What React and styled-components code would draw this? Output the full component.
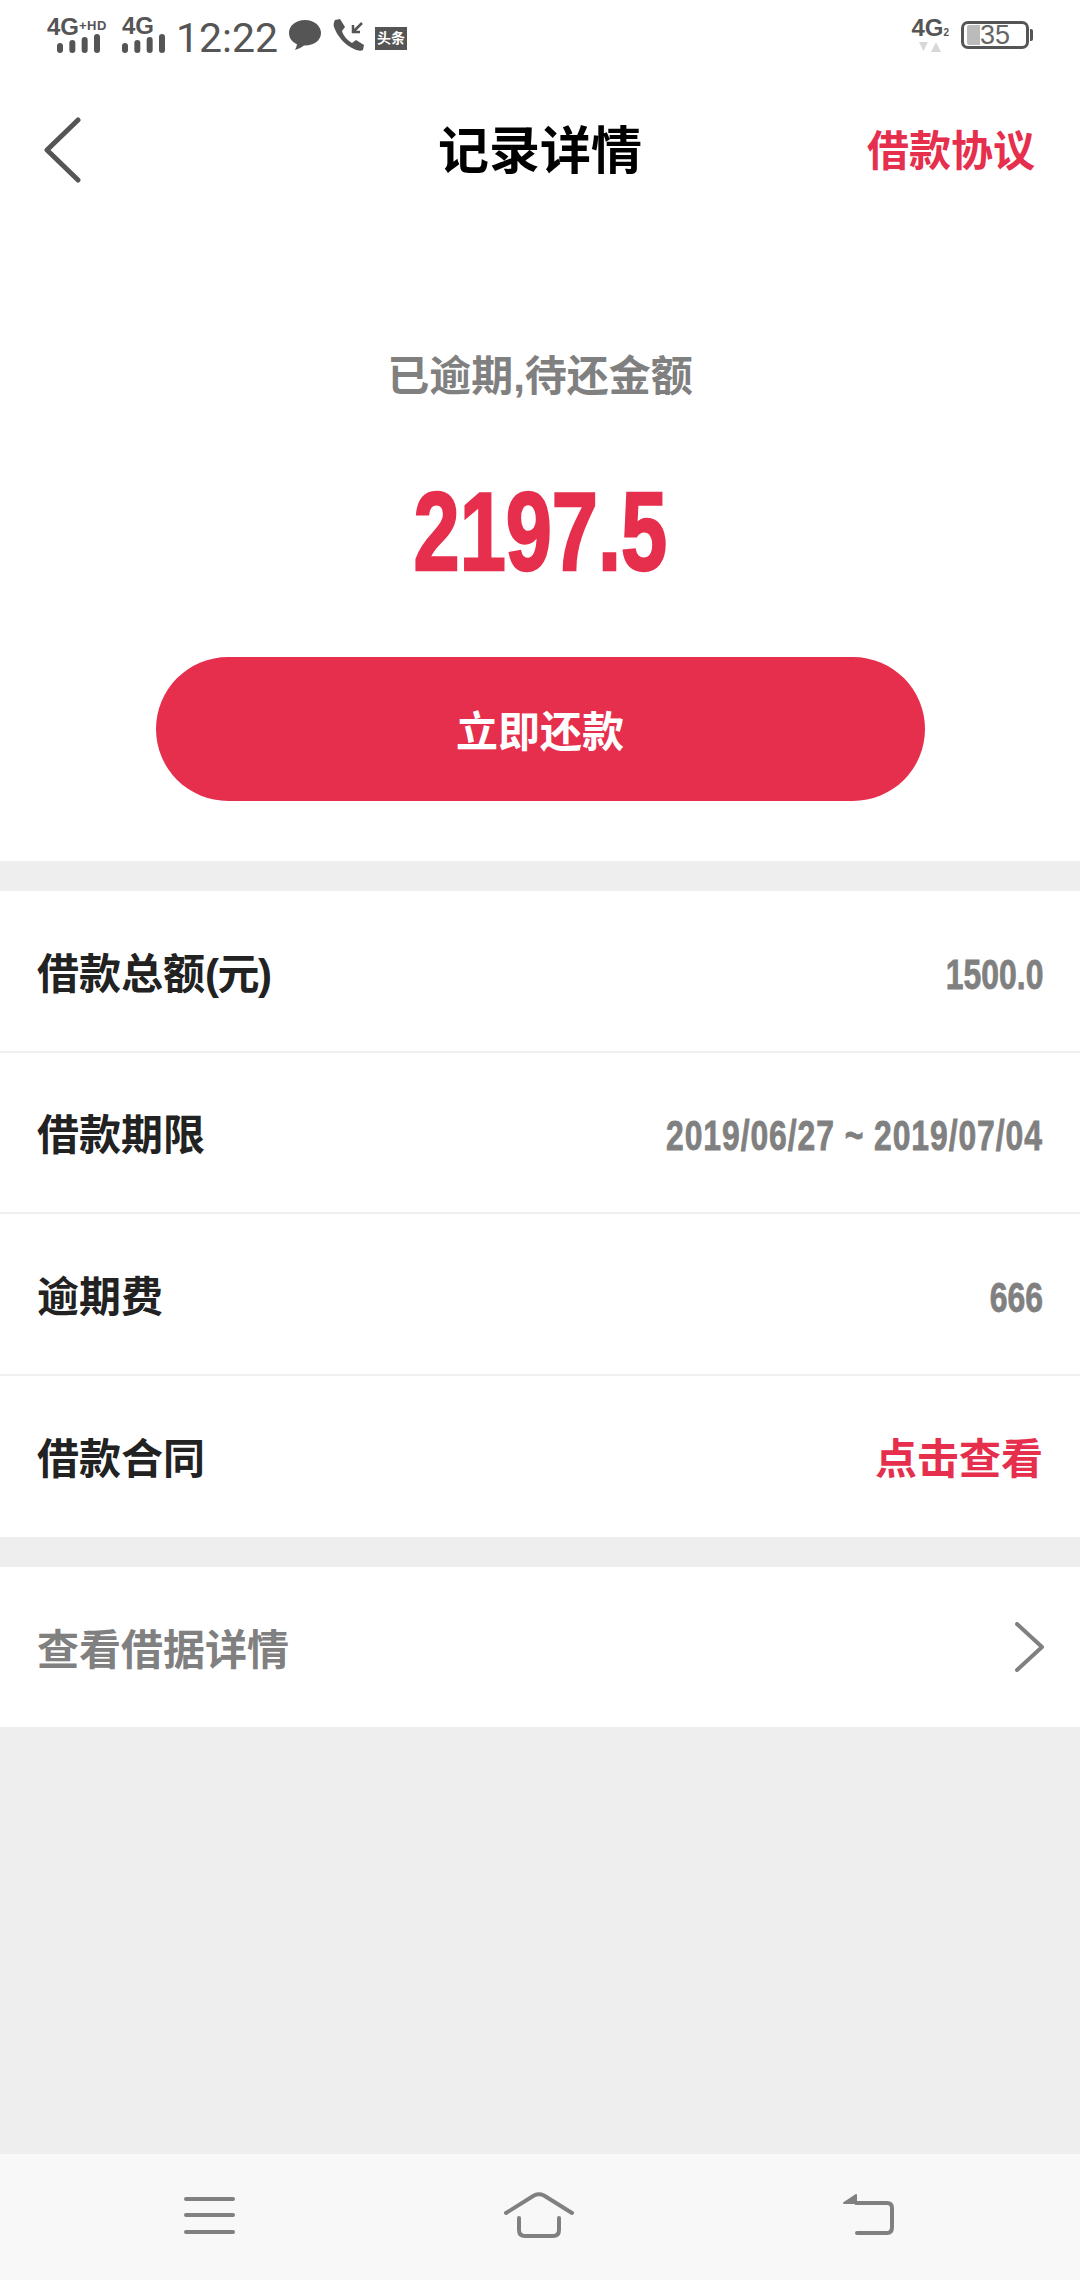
import React from "react";
import styled, { createGlobalStyle } from "styled-components";

const RED = "#e62e4d";
const GREY = "#808080";
const ICON = "#555";

const GlobalStyle = createGlobalStyle`
  html, body {
    margin: 0;
    padding: 0;
    background: #eee;
    font-family: "Liberation Sans", "Noto Sans CJK SC", sans-serif;
  }
`;

const Page = styled.div`
  display: flex;
  flex-direction: column;
  width: 1080px;
  height: 2280px;
  overflow: hidden;
  background: #eee;
`;

const StatusBar = styled.div`
  display: flex;
  align-items: center;
  justify-content: space-between;
  height: 70px;
  padding: 0 47px;
  background: #fff;
  box-sizing: border-box;
  color: ${ICON};
`;

const StatusGroup = styled.div`
  display: flex;
  align-items: center;
`;

const Signal = styled.div`
  display: flex;
  flex-direction: column;
  width: ${props => props.$width}px;
  margin-right: ${props => props.$gap}px;
  margin-top: 1px;
`;

const SignalLabel = styled.div`
  height: 16px;
  font-size: 24px;
  line-height: 16px;
  font-weight: 700;
  white-space: nowrap;
`;

const SignalSup = styled.span`
  font-size: 13px;
  vertical-align: 5px;
  letter-spacing: 0.5px;
`;

const SignalBars = styled.div`
  height: 19px;
  margin-left: ${props => props.$inset || 0}px;
  line-height: 0;
`;

const Time = styled.div`
  margin: 5px 11px 0 0;
  font-family: Roboto, sans-serif;
  font-size: 41px;
  line-height: 40px;
`;

const PhoneSlot = styled.div`
  margin-left: 11px;
  line-height: 0;
`;

const Toutiao = styled.div`
  width: 32px;
  height: 23px;
  margin: 6px 0 0 9px;
  background: ${ICON};
  color: #fff;
  font-size: 14px;
  line-height: 23px;
  font-weight: 700;
  text-align: center;
  white-space: nowrap;
`;

const Network = styled.div`
  display: flex;
  flex-direction: column;
  align-items: center;
  margin-right: 12px;
  font-size: 24px;
  line-height: 19px;
  font-weight: 700;
`;

const NetworkSub = styled.span`
  font-size: 10px;
`;

const Battery = styled.div`
  position: relative;
  display: flex;
  align-items: center;
  width: 68px;
  height: 28px;
  margin-right: 4px;
  padding: 0 3px;
  border: 3px solid ${ICON};
  border-radius: 7px;
  box-sizing: border-box;
  font-size: 27px;
  color: #666;
  &::after {
    content: "";
    position: absolute;
    right: -7px;
    top: 5px;
    width: 3px;
    height: 12px;
    background: ${ICON};
    border-radius: 0 2px 2px 0;
  }
`;

const BatteryFill = styled.div`
  width: 13px;
  height: 20px;
  background: #bbb;
  border-radius: 2px 0 0 2px;
`;

const Header = styled.div`
  display: grid;
  grid-template-columns: 1fr auto 1fr;
  align-items: center;
  height: 160px;
  padding: 0 45px;
  background: #fff;
  box-sizing: border-box;
`;

const BackSlot = styled.div`
  margin-left: -3px;
  line-height: 0;
`;

const Title = styled.div`
  padding-top: 3px;
  font-size: 51px;
  line-height: 60px;
  font-weight: 700;
  color: #000;
`;

const HeaderLink = styled.div`
  justify-self: end;
  padding-top: 3px;
  font-size: 42px;
  line-height: 60px;
  font-weight: 700;
  color: ${RED};
`;

const Hero = styled.div`
  display: flex;
  flex-direction: column;
  align-items: center;
  padding: 117px 0 60px;
  background: #fff;
`;

const HeroLabel = styled.div`
  font-size: 42px;
  line-height: 60px;
  font-weight: 700;
  color: ${GREY};
`;

const Amount = styled.div`
  margin-top: 65px;
  font-size: 112px;
  line-height: 120px;
  font-weight: 700;
  color: ${RED};
  -webkit-text-stroke: 2.5px ${RED};
  transform: scaleX(0.74);
`;

const PayButton = styled.div`
  width: 769px;
  height: 144px;
  margin-top: 65px;
  padding-top: 4px;
  border-radius: 72px;
  background: ${RED};
  color: #fff;
  font-size: 42px;
  line-height: 144px;
  font-weight: 700;
  text-align: center;
  box-sizing: border-box;
`;

const List = styled.div`
  margin-top: 30px;
  background: #fff;
`;

const Row = styled.div`
  display: flex;
  align-items: center;
  justify-content: space-between;
  height: ${props => props.$height || "161.5px"};
  padding: 0 37px;
  box-sizing: border-box;
  border-bottom: ${props => (props.$last ? "none" : "2px solid #f0f0f0")};
`;

const RowLabel = styled.div`
  padding-top: 8px;
  font-size: 42px;
  line-height: 60px;
  font-weight: 700;
  color: ${props => props.$color || "#222"};
`;

const Paren = styled.span`
  letter-spacing: -1.5px;
`;

const RowValue = styled.div`
  padding-top: 8px;
  font-size: 42px;
  line-height: 60px;
  font-weight: 700;
  color: ${GREY};
  white-space: nowrap;
  letter-spacing: ${props => (props.$wide ? "1.2px" : "0")};
  -webkit-text-stroke: 0.8px ${GREY};
  transform: scaleX(0.76);
  transform-origin: right center;
`;

const RowLink = styled.div`
  padding-top: 8px;
  font-size: 42px;
  line-height: 60px;
  font-weight: 700;
  color: ${RED};
`;

const ChevronSlot = styled.div`
  margin-right: -2px;
  line-height: 0;
`;

const Spacer = styled.div`
  flex: 1;
`;

const NavBar = styled.div`
  display: grid;
  grid-template-columns: repeat(3, 1fr);
  justify-items: center;
  align-items: center;
  height: 126px;
  padding: 0 48px 4px 46px;
  box-sizing: border-box;
  background: #f8f8f8;
`;

const Bars = ({ width, heights }) => (
  <svg width={width} height="19" viewBox={`0 0 ${width} 19`} fill={ICON}>
    {heights.map((h, i) => (
      <rect key={i} x={i * ((width - 6) / 3)} y={19 - h} width="6" height={h} rx="3" />
    ))}
  </svg>
);

const BackIcon = () => (
  <svg width="40" height="66" viewBox="0 0 40 66" fill="none" stroke={ICON} strokeWidth="5" strokeLinecap="round" strokeLinejoin="round">
    <path d="M36 3 L5 33 L36 63" />
  </svg>
);

const ChevronIcon = () => (
  <svg width="30" height="50" viewBox="0 0 30 50" fill="none" stroke={GREY} strokeWidth="4" strokeLinecap="round" strokeLinejoin="round">
    <path d="M2 2 L27 25 L2 48" />
  </svg>
);

export default function App() {
  return (
    <Page>
      <GlobalStyle />
      <StatusBar>
        <StatusGroup>
          <Signal $width={64} $gap={11}>
            <SignalLabel>4G<SignalSup>+HD</SignalSup></SignalLabel>
            <SignalBars $inset={10}>
              <Bars width={43} heights={[10, 13, 16, 19]} />
            </SignalBars>
          </Signal>
          <Signal $width={44} $gap={10}>
            <SignalLabel>4G</SignalLabel>
            <SignalBars>
              <Bars width={43} heights={[10, 13, 16, 19]} />
            </SignalBars>
          </Signal>
          <Time>12:22</Time>
          <svg width="32" height="30" viewBox="0 0 32 30" fill={ICON}>
            <path d="M16 0C7 0 0 5.5 0 13c0 5 3 9 8 11.200-.3 2-1 4-2 5.800 3.500-1 7-3 9-4.500h1c9 0 16-5.200 16-12.500S25 0 16 0z" />
          </svg>
          <PhoneSlot>
            <svg width="34" height="32" viewBox="0 0 34 32" fill={ICON}>
              <path d="M3 1 L8 0 L13 8 L10 12 C11 16 15 21 20 24 L24 21 L32 26 L31 31 C29 32 26 32 22 30 C13 26 5 17 2 8 C1 5 2 3 3 1z" />
              <path d="M30 4 L22 12 M21 6 L21 13 L28 13" fill="none" stroke={ICON} strokeWidth="2.500" />
            </svg>
          </PhoneSlot>
          <Toutiao>头条</Toutiao>
        </StatusGroup>
        <StatusGroup>
          <Network>
            <span>4G<NetworkSub>2</NetworkSub></span>
            <svg width="22" height="10" viewBox="0 0 22 10" fill="#d8d8d8">
              <path d="M0 0h9L4.500 9zM12 10h10L17 0z" />
            </svg>
          </Network>
          <Battery>
            <BatteryFill />
            <span>35</span>
          </Battery>
        </StatusGroup>
      </StatusBar>
      <Header>
        <BackSlot>
          <BackIcon />
        </BackSlot>
        <Title>记录详情</Title>
        <HeaderLink>借款协议</HeaderLink>
      </Header>
      <Hero>
        <HeroLabel>已逾期,待还金额</HeroLabel>
        <Amount>2197.5</Amount>
        <PayButton>立即还款</PayButton>
      </Hero>
      <List>
        <Row>
          <RowLabel>借款总额<Paren>(元)</Paren></RowLabel>
          <RowValue>1500.0</RowValue>
        </Row>
        <Row>
          <RowLabel>借款期限</RowLabel>
          <RowValue $wide>2019/06/27 ~ 2019/07/04</RowValue>
        </Row>
        <Row>
          <RowLabel>逾期费</RowLabel>
          <RowValue>666</RowValue>
        </Row>
        <Row $last>
          <RowLabel>借款合同</RowLabel>
          <RowLink>点击查看</RowLink>
        </Row>
      </List>
      <List>
        <Row $last $height="160px">
          <RowLabel $color={GREY}>查看借据详情</RowLabel>
          <ChevronSlot>
            <ChevronIcon />
          </ChevronSlot>
        </Row>
      </List>
      <Spacer />
      <NavBar>
        <svg width="52" height="40" viewBox="0 0 52 40" fill={GREY}>
          <rect x="0" y="2" width="51" height="4" rx="2" />
          <rect x="0" y="18" width="51" height="4" rx="2" />
          <rect x="0" y="35" width="51" height="4" rx="2" />
        </svg>
        <svg width="70" height="46" viewBox="0 0 70 46" fill="none" stroke={GREY} strokeWidth="4" strokeLinecap="round" strokeLinejoin="round">
          <path d="M2 21 L30 3.500 Q35 1 40 3.500 L68 21" />
          <path d="M15 26 V38 Q15 44 21 44 H49 Q55 44 55 38 V26" />
        </svg>
        <svg width="52" height="42" viewBox="0 0 52 42" fill="none" stroke={GREY} strokeWidth="4" strokeLinecap="round" strokeLinejoin="round">
          <path d="M14 9 H45 Q50 9 50 14 V33 Q50 39 45 39 H15" />
          <path d="M2 9 L14 1 V9 Z" fill={GREY} strokeWidth="2" />
        </svg>
      </NavBar>
    </Page>
  );
}
